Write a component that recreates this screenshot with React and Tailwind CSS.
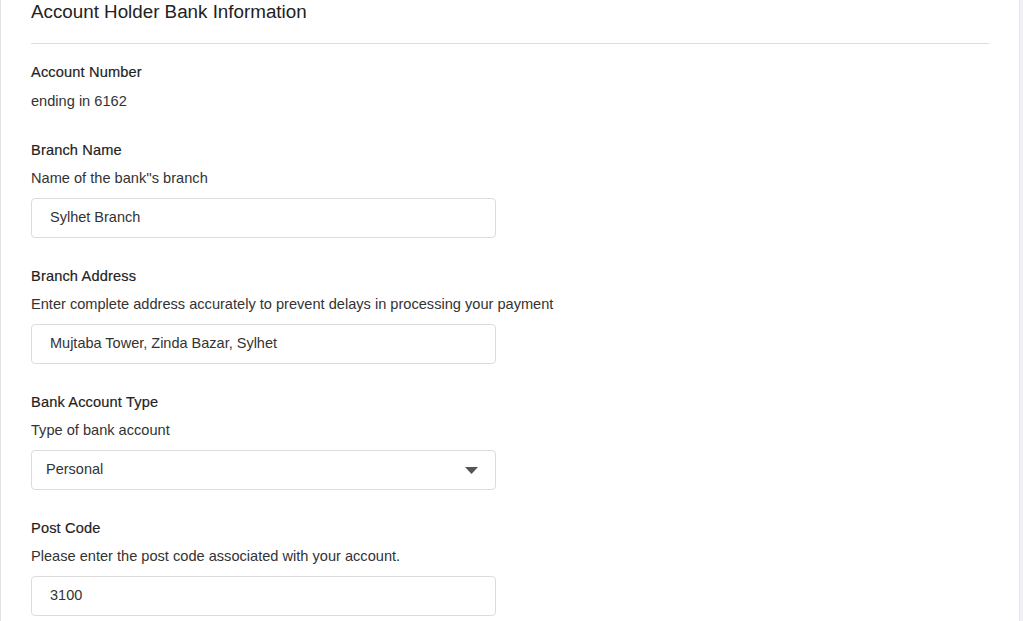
import React from "react";

function Label({ children, className = "" }) {
  return (
    <div className={"text-[14.6px] leading-[20px] tracking-[0.15px] text-[#222] [-webkit-text-stroke:0.18px_#222] " + className}>
      {children}
    </div>
  );
}

function Field({ label, desc, children, first }) {
  return (
    <div className={first ? "mt-[29px]" : "mt-[28px]"}>
      <Label>{label}</Label>
      <div className="mt-2 text-[14.6px] leading-[20px] text-[#333]">{desc}</div>
      <div className="mt-2.5">{children}</div>
    </div>
  );
}

function TextBox({ value }) {
  return (
    <div className="w-[465px] h-[40px] border border-[#dcdcdc] rounded-[4px] bg-white flex items-center pl-[18px] text-[14.5px] text-[#333]">
      {value}
    </div>
  );
}

export default function App() {
  return (
    <div
      className="w-[1023px] h-[621px] overflow-hidden bg-white flex"
      style={{ fontFamily: '"Liberation Sans", Arial, sans-serif' }}
    >
      <div className="flex-1 border-l border-[#e3e3e3] pl-[30px] pr-[30px]">
        <div className="text-[18.8px] leading-[24px] text-[#222]">Account Holder Bank Information</div>
        <div className="mt-[19px] h-px bg-[#dedede]" />
        <Label className="mt-[18px]">Account Number</Label>
        <div className="mt-[9px] text-[14.6px] leading-[20px] text-[#333]">ending in 6162</div>
        <Field first label="Branch Name" desc={"Name of the bank''s branch"}>
          <TextBox value="Sylhet Branch" />
        </Field>
        <Field
          label="Branch Address"
          desc="Enter complete address accurately to prevent delays in processing your payment"
        >
          <TextBox value="Mujtaba Tower, Zinda Bazar, Sylhet" />
        </Field>
        <Field label="Bank Account Type" desc="Type of bank account">
          <div className="w-[465px] h-[40px] border border-[#dcdcdc] rounded-[4px] bg-white flex items-center justify-between pl-[14px] pr-[17px] text-[14.5px] text-[#333]">
            <span>Personal</span>
            <svg width="13" height="7" viewBox="0 0 13 7">
              <path d="M0 0 H13 L6.5 7 Z" fill="#555" />
            </svg>
          </div>
        </Field>
        <Field
          label="Post Code"
          desc="Please enter the post code associated with your account."
        >
          <TextBox value="3100" />
        </Field>
      </div>
      <div className="w-[4px] border-l border-[#e6e6e6] bg-[#f0f1f4]" />
    </div>
  );
}
